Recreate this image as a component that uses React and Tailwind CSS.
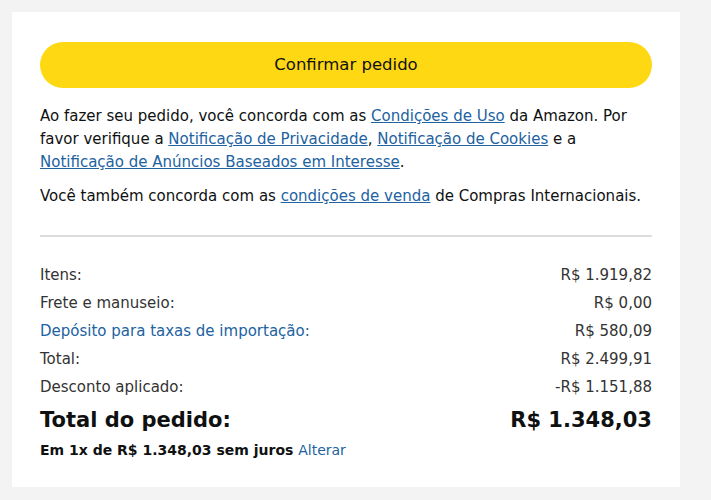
import React from "react";

const font = { fontFamily: '"DejaVu Sans", "Liberation Sans", sans-serif' };

function Row({ label, value, link }) {
  return (
    <div className="flex justify-between items-center h-[28px] text-[15px] text-[#333]">
      <span className={link ? "text-[#2162a1]" : ""}>{label}</span>
      <span>{value}</span>
    </div>
  );
}

export default function App() {
  return (
    <div className="w-[711px] h-[500px] bg-[#f3f3f3] pt-[12px] pl-[12px]" style={font}>
      <div className="w-[668px] h-[475px] bg-white px-[28px] pt-[30px]">
        <button className="w-full h-[46px] rounded-full bg-[#ffd814] text-[16.5px] text-[#0f1111] flex items-center justify-center">
          Confirmar pedido
        </button>
        <div className="mt-[17px] text-[15px] leading-[23px] text-[#0f1111]">
          <p>
            Ao fazer seu pedido, você concorda com as{" "}
            <a className="text-[#2162a1] underline">Condições de Uso</a> da Amazon. Por favor verifique a{" "}
            <a className="text-[#2162a1] underline">Notificação de Privacidade</a>,{" "}
            <a className="text-[#2162a1] underline">Notificação de Cookies</a> e a{" "}
            <a className="text-[#2162a1] underline">Notificação de Anúncios Baseados em Interesse</a>.
          </p>
          <p className="mt-[11px]">
            Você também concorda com as{" "}
            <a className="text-[#2162a1] underline">condições de venda</a> de Compras Internacionais.
          </p>
        </div>
        <div className="mt-[27px] h-[2px] bg-[#ddd]" />
        <div className="mt-[24px]">
          <Row label="Itens:" value="R$ 1.919,82" />
          <Row label="Frete e manuseio:" value="R$ 0,00" />
          <Row label="Depósito para taxas de importação:" value="R$ 580,09" link />
          <Row label="Total:" value="R$ 2.499,91" />
          <Row label="Desconto aplicado:" value="-R$ 1.151,88" />
        </div>
        <div className="flex justify-between items-center h-[40px] text-[21px] font-bold text-[#0f1111]">
          <span>Total do pedido:</span>
          <span>R$ 1.348,03</span>
        </div>
        <div className="text-[14px] leading-[18px] font-bold text-[#0f1111]">
          Em 1x de R$ 1.348,03 sem juros <span className="font-normal text-[#2162a1]">Alterar</span>
        </div>
      </div>
    </div>
  );
}
